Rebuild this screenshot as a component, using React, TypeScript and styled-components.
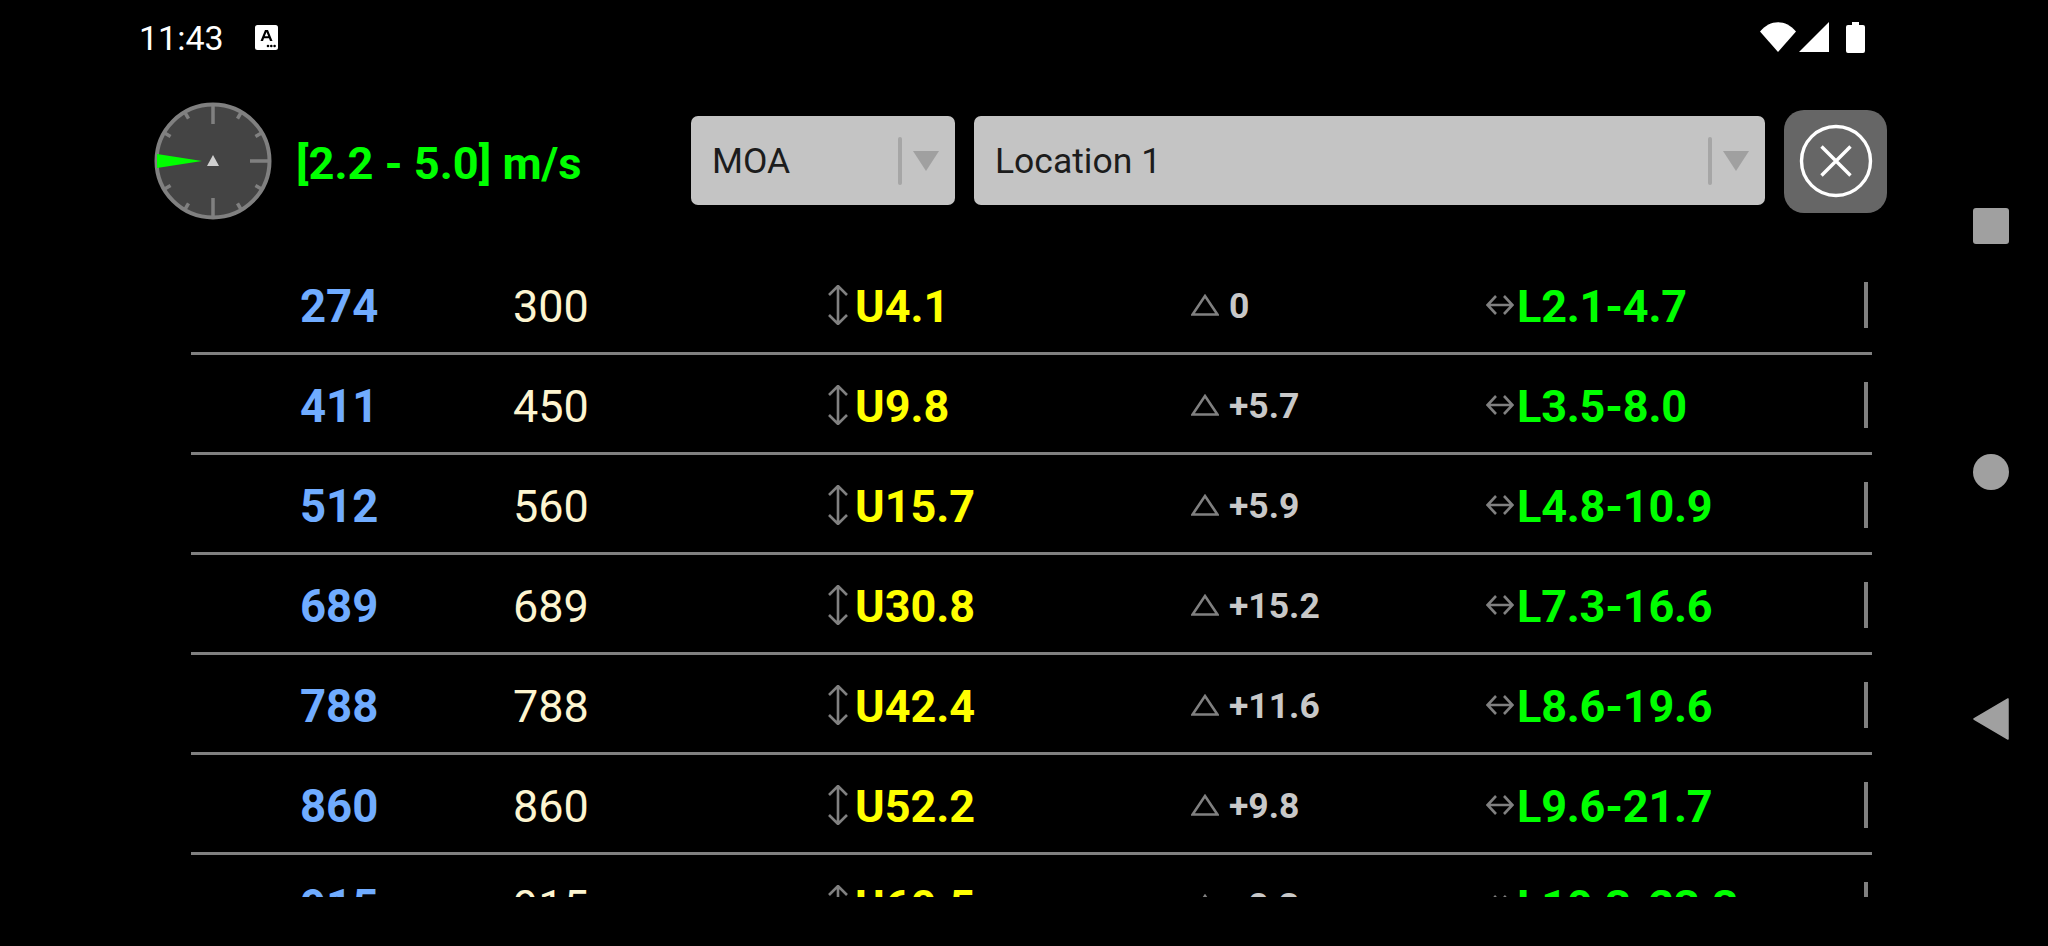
import React from 'react'
import styled, { createGlobalStyle } from 'styled-components'

const GlobalStyle = createGlobalStyle`
    html, body {
        margin: 0;
        padding: 0;
        background: #000;
        font-family: Roboto, "Liberation Sans", sans-serif;
    }
`

type Reading = {
    range: string
    target: string
    up: string
    delta: string
    left: string
}

const readings: Reading[] = [
    { range: '274', target: '300', up: 'U4.1', delta: '0', left: 'L2.1-4.7' },
    { range: '411', target: '450', up: 'U9.8', delta: '+5.7', left: 'L3.5-8.0' },
    { range: '512', target: '560', up: 'U15.7', delta: '+5.9', left: 'L4.8-10.9' },
    { range: '689', target: '689', up: 'U30.8', delta: '+15.2', left: 'L7.3-16.6' },
    { range: '788', target: '788', up: 'U42.4', delta: '+11.6', left: 'L8.6-19.6' },
    { range: '860', target: '860', up: 'U52.2', delta: '+9.8', left: 'L9.6-21.7' },
    { range: '915', target: '915', up: 'U60.5', delta: '+8.3', left: 'L10.3-23.3' },
]

const ticks = [0, 30, 60, 90, 120, 150, 180, 210, 240, 270, 300, 330]

const Compass = () => (
    <svg width="118" height="118" viewBox="0 0 118 118">
        <circle cx="59" cy="59" r="56.5" fill="#444444" stroke="#808080" strokeWidth="4" />
        {ticks.map((deg) => (
            <line
                key={deg}
                x1="59"
                y1="3"
                x2="59"
                y2={deg % 90 === 0 ? 22 : 10}
                stroke="#808080"
                strokeWidth="3.5"
                transform={`rotate(${deg} 59 59)`}
            />
        ))}
        <path d="M3 52 L48 59 L3 66 Z" fill="#00ff00" />
        <path d="M59 53 L65 64 L53 64 Z" fill="#d0d0d0" />
    </svg>
)

const UpDownIcon = () => (
    <svg width="20" height="40" viewBox="0 0 20 40" fill="none" stroke="#808080" strokeWidth="2.6">
        <path d="M10 1 V39 M1 10 L10 1 L19 10 M1 30 L10 39 L19 30" />
    </svg>
)

const DeltaIcon = () => (
    <svg width="28" height="22" viewBox="0 0 28 22" fill="none" stroke="#808080" strokeWidth="2.6">
        <path d="M14 2 L26.5 20.5 H1.5 Z" />
    </svg>
)

const LeftRightIcon = () => (
    <svg width="28" height="22" viewBox="0 0 28 22" fill="none" stroke="#808080" strokeWidth="2.6">
        <path d="M1 11 H27 M10 2 L1.5 11 L10 20 M18 2 L26.5 11 L18 20" />
    </svg>
)

const App = () => (
    <Screen>
        <GlobalStyle />
        <Main>
            <StatusBar>
                <Clock>11:43</Clock>
                <NotificationIcon>
                    <svg width="23" height="25" viewBox="0 0 23 25">
                        <rect width="23" height="25" rx="2.5" fill="#fff" />
                        <path d="M5.5 16 L10 5 H13 L17.5 16 H15 L14 13.3 H9 L8 16 Z M9.8 11.2 H13.2 L11.5 7 Z" fill="#000" fillRule="evenodd" />
                        <circle cx="13" cy="21" r="1.3" fill="#000" />
                        <circle cx="16.3" cy="21" r="1.3" fill="#000" />
                        <circle cx="19.6" cy="21" r="1.3" fill="#000" />
                    </svg>
                </NotificationIcon>
                <StatusIcons>
                    <svg width="36" height="30" viewBox="0 0 36 30">
                        <path d="M0 9.5 C10 -3 26 -3 36 9.5 L18 30 Z" fill="#fff" />
                    </svg>
                    <svg width="30" height="30" viewBox="0 0 30 30">
                        <path d="M30 0 V30 H0 Z" fill="#fff" />
                    </svg>
                    <BatteryGap>
                        <svg width="19" height="31" viewBox="0 0 19 31">
                            <path d="M6 0 H13 V3 H17 Q19 3 19 5 V29 Q19 31 17 31 H2 Q0 31 0 29 V5 Q0 3 2 3 H6 Z" fill="#fff" />
                        </svg>
                    </BatteryGap>
                </StatusIcons>
            </StatusBar>
            <Header>
                <Compass />
                <WindSpeed>[2.2 - 5.0] m/s</WindSpeed>
                <Select $width={264}>
                    <SelectLabel>MOA</SelectLabel>
                    <SelectDivider />
                    <SelectArrow />
                </Select>
                <Select $grow>
                    <SelectLabel>Location 1</SelectLabel>
                    <SelectDivider />
                    <SelectArrow />
                </Select>
                <CloseButton>
                    <svg width="74" height="74" viewBox="0 0 74 74" fill="none" stroke="#fff" strokeWidth="3.4">
                        <circle cx="37" cy="37" r="34.5" />
                        <path d="M22.5 22.5 L51.5 51.5 M51.5 22.5 L22.5 51.5" />
                    </svg>
                </CloseButton>
            </Header>
            <List>
                {readings.map((r) => (
                    <Row key={r.range}>
                        <RangeCell>{r.range}</RangeCell>
                        <TargetCell>{r.target}</TargetCell>
                        <IconCell>
                            <UpDownIcon />
                            <UpValue>{r.up}</UpValue>
                        </IconCell>
                        <DeltaCell>
                            <DeltaIcon />
                            <DeltaValue>{r.delta}</DeltaValue>
                        </DeltaCell>
                        <IconCell>
                            <LeftRightIcon />
                            <LeftValue>{r.left}</LeftValue>
                        </IconCell>
                        <RowBar />
                    </Row>
                ))}
            </List>
        </Main>
        <NavBar>
            <NavSquare />
            <NavCircle />
            <NavBack viewBox="0 0 36 42">
                <path d="M35 1 V41 L1 21 Z" fill="#a0a0a0" stroke="#a0a0a0" strokeWidth="1.5" strokeLinejoin="round" />
            </NavBack>
        </NavBar>
    </Screen>
)
export default App

const Screen = styled.div`
    display: flex;
    width: 2048px;
    height: 946px;
    overflow: hidden;
    background: #000;
`

const Main = styled.div`
    display: flex;
    flex-direction: column;
    width: 1930px;
`

const StatusBar = styled.div`
    display: flex;
    align-items: center;
    height: 74px;
    padding: 0 65px 0 139px;
`

const Clock = styled.span`
    width: 116px;
    padding-top: 2px;
    font-size: 34px;
    color: #fff;
`

const NotificationIcon = styled.span`
    display: flex;
`

const StatusIcons = styled.div`
    display: flex;
    align-items: center;
    gap: 3px;
    margin-left: auto;
`

const BatteryGap = styled.span`
    display: flex;
    margin-left: 14px;
`

const Header = styled.div`
    display: flex;
    align-items: center;
    height: 174px;
    margin-bottom: 7px;
    padding: 0 43px 0 154px;
`

const WindSpeed = styled.span`
    width: 395px;
    margin-left: 24px;
    padding-top: 5px;
    font-size: 45.2px;
    font-weight: 700;
    color: #00ff00;
    white-space: nowrap;
`

const Select = styled.div<{ $width?: number; $grow?: boolean }>`
    display: flex;
    align-items: center;
    box-sizing: border-box;
    height: 89px;
    width: ${(p) => (p.$width ? `${p.$width}px` : 'auto')};
    flex: ${(p) => (p.$grow ? 1 : 'none')};
    margin: 0 19px 1px 0;
    padding: 0 16px 0 21px;
    border-radius: 7px;
    background: #c4c4c4;
`

const SelectLabel = styled.span`
    flex: 1;
    font-size: 35.5px;
    color: #1c1c1c;
`

const SelectDivider = styled.span`
    width: 4px;
    height: 48px;
    margin-right: 11px;
    border-radius: 2px;
    background: #a6a6a6;
`

const SelectArrow = styled.span`
    width: 0;
    height: 0;
    border-left: 13px solid transparent;
    border-right: 13px solid transparent;
    border-top: 20px solid #a0a0a0;
`

const CloseButton = styled.div`
    display: flex;
    align-items: center;
    justify-content: center;
    width: 103px;
    height: 103px;
    border-radius: 20px;
    background: #666666;
`

const List = styled.div`
    height: 642px;
    margin: 0 58px 0 191px;
    overflow: hidden;
`

const Row = styled.div`
    display: grid;
    grid-template-columns: 213px 315px 363px 295px 1fr auto;
    align-items: center;
    box-sizing: border-box;
    height: 100px;
    padding: 2px 0 0 109px;
    border-bottom: 3px solid #808080;
`

const RangeCell = styled.span`
    padding-top: 3px;
    font-size: 45.5px;
    font-weight: 700;
    color: #70acff;
`

const TargetCell = styled.span`
    padding-top: 3px;
    font-size: 45px;
    color: #fdf5d0;
`

const IconCell = styled.span`
    display: flex;
    align-items: center;
    gap: 7px;
`

const DeltaCell = styled.span`
    display: flex;
    align-items: center;
    gap: 10px;
`

const UpValue = styled.span`
    padding-top: 3px;
    font-size: 45px;
    font-weight: 700;
    color: #ffff00;
`

const DeltaValue = styled.span`
    padding-top: 3px;
    font-size: 35.5px;
    font-weight: 700;
    color: #c8c8c8;
`

const LeftValue = styled.span`
    margin-left: -4px;
    padding-top: 3px;
    font-size: 45px;
    font-weight: 700;
    letter-spacing: -0.2px;
    color: #00ff00;
`

const RowBar = styled.span`
    width: 4px;
    height: 46px;
    margin-right: 4px;
    background: #808080;
`

const NavBar = styled.div`
    display: flex;
    flex-direction: column;
    align-items: center;
    justify-content: center;
    gap: 210px;
    width: 118px;
    padding: 0 0 2px 4px;
    box-sizing: border-box;
`

const NavSquare = styled.span`
    width: 36px;
    height: 36px;
    border-radius: 3px;
    background: #a0a0a0;
`

const NavCircle = styled.span`
    width: 36px;
    height: 36px;
    border-radius: 50%;
    background: #a0a0a0;
`

const NavBack = styled.svg`
    width: 36px;
    height: 42px;
    margin: -2px 0 -4px;
`
